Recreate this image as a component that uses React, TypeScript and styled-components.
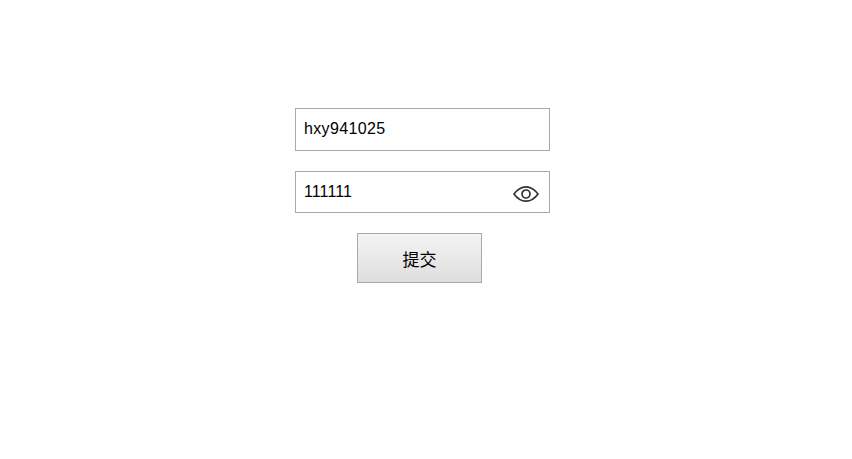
import React from "react";
import styled, { createGlobalStyle } from "styled-components";

const Global = createGlobalStyle`
  html, body { margin: 0; padding: 0; background: #fff; }
  body { font-family: "Liberation Sans", "Noto Sans CJK SC", sans-serif; }
`;

const Page = styled.div`
  width: 852px;
  height: 459px;
  padding: 108px 0 0 295px;
  box-sizing: border-box;
`;

const Form = styled.form`
  width: 255px;
  display: flex;
  flex-direction: column;
`;

const Field = styled.div<{ $h: number; $mb: number }>`
  height: ${(p) => p.$h}px;
  margin-bottom: ${(p) => p.$mb}px;
  box-sizing: border-box;
  border: 1px solid #a9a9a9;
  display: flex;
  align-items: center;
  padding: 0 10px 0 8px;
`;

const Input = styled.input<{ $spacing?: number; $lift?: number }>`
  flex: 1;
  min-width: 0;
  border: 0;
  outline: 0;
  padding: 0 0 ${(p) => p.$lift ?? 0}px;
  background: transparent;
  font: 16px "Liberation Sans", "Noto Sans CJK SC", sans-serif;
  letter-spacing: ${(p) => p.$spacing ?? 0}px;
  color: #000;
`;

const EyeIcon = styled.svg`
  width: 26px;
  height: 18px;
  margin-top: 3px;
  flex: none;
`;

const Submit = styled.button`
  width: 125px;
  height: 50px;
  margin-left: 62px;
  box-sizing: border-box;
  border: 1px solid #a9a9a9;
  background: linear-gradient(#f4f4f4, #dedede);
  font: 17px "Liberation Sans", "Noto Sans CJK SC", sans-serif;
  color: #000;
  padding: 0;
`;

export default function App() {
  return (
    <Page>
      <Global />
      <Form onSubmit={(e) => e.preventDefault()}>
        <Field $h={43} $mb={20}>
          <Input defaultValue="hxy941025" $spacing={0.35} $lift={2} />
        </Field>
        <Field $h={42} $mb={20}>
          <Input defaultValue="111111" $spacing={0.1} />
          <EyeIcon viewBox="0 0 26 18" fill="none" stroke="#333" strokeWidth="1.7">
            <path d="M1 9C4.5 4.200 8.500 1.800 13 1.800S21.500 4.200 25 9C21.500 13.800 17.500 16.200 13 16.200S4.500 13.800 1 9Z" />
            <circle cx="13" cy="9" r="4" />
          </EyeIcon>
        </Field>
        <Submit type="submit">提交</Submit>
      </Form>
    </Page>
  );
}
